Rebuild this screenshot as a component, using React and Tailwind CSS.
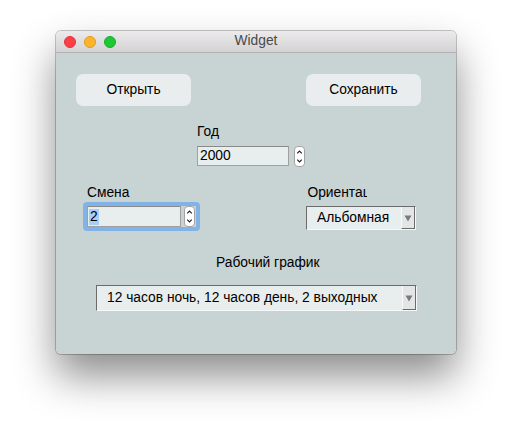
import React from "react";

function Spinner() {
  return (
    <div className="w-[11px] h-[21px] shrink-0">
      <svg width="11" height="21" viewBox="0 0 11 21">
        <rect x="0.5" y="0.5" width="10" height="20" rx="3.5" fill="#ffffff" stroke="#a3a3a3" />
        <path d="M3.2 7.4 L5.5 5 L7.8 7.4" fill="none" stroke="#222" strokeWidth="1.2" />
        <path d="M3.2 13.6 L5.5 16 L7.8 13.6" fill="none" stroke="#222" strokeWidth="1.2" />
      </svg>
    </div>
  );
}

function Combo({ text, width, height }) {
  return (
    <div
      className={`flex border-t border-l border-t-[#6b6b6b] border-l-[#6b6b6b] border-r border-b border-r-[#f7f7f7] border-b-[#f7f7f7] bg-[#e8eded] ${width} ${height}`}
    >
      <div className="flex-1 flex items-center pl-[10px] text-black whitespace-nowrap overflow-hidden">
        {text}
      </div>
      <div className="w-[14px] flex items-center justify-center bg-[#e3e6e6] border-l border-l-[#fafafa] border-r border-b border-r-[#6b6b6b] border-b-[#6b6b6b]">
        <svg width="8" height="8" viewBox="0 0 8 8">
          <path d="M0.5 1.5 L7.5 1.5 L4 7.5 Z" fill="#7a7a7a" />
        </svg>
      </div>
    </div>
  );
}

export default function App() {
  return (
    <div
      className="w-[512px] h-[434px] bg-white pt-[31px] pl-[56px]"
      style={{ fontFamily: '"Liberation Sans", Arial, sans-serif' }}
    >
      <div className="w-[400px] h-[323px] rounded-[5px] overflow-hidden shadow-[0_22px_42px_rgba(0,0,0,0.45),0_0_0_1px_rgba(0,0,0,0.22)] flex flex-col">
        <div className="h-[22px] shrink-0 bg-gradient-to-b from-[#ecebec] to-[#d4d2d4] border-b border-b-[#b3b1b3] flex items-center relative">
          <div className="flex items-center gap-[8px] pl-[8px]">
            <div className="w-[12px] h-[12px] rounded-full bg-[#fc3e47] border border-[#e2343d]" />
            <div className="w-[12px] h-[12px] rounded-full bg-[#fdb32a] border border-[#e09c1e]" />
            <div className="w-[12px] h-[12px] rounded-full bg-[#1fc734] border border-[#17ad29]" />
          </div>
          <div className="absolute inset-0 flex items-center justify-center text-[13.8px] text-[#4a4a4a]">
            Widget
          </div>
        </div>

        <div className="flex-1 bg-[#c8d3d3] flex flex-col text-[13.8px] text-black leading-[16px]">
          <div className="flex mt-[21px] pl-[20px]">
            <div className="w-[115px] h-[32px] rounded-[7px] bg-[#e9eded] flex items-center justify-center">
              Открыть
            </div>
            <div className="ml-[115px] w-[115px] h-[32px] rounded-[7px] bg-[#e9eded] flex items-center justify-center">
              Сохранить
            </div>
          </div>

          <div className="mt-[18px] pl-[141px] flex flex-col">
            <div className="h-[16px]">Год</div>
            <div className="mt-[6px] flex items-start">
              <div className="w-[92px] h-[20px] bg-[#e8eded] border border-[#a0a0a0] border-t-[#8a8a8a] flex items-center pl-[2px]">
                2000
              </div>
              <div className="ml-[5px]">
                <Spinner />
              </div>
            </div>
          </div>

          <div className="mt-[18px] flex">
            <div className="ml-[31px] h-[16px]">Смена</div>
            <div className="ml-[178px] h-[16px] w-[60px] overflow-hidden whitespace-nowrap">Ориентация</div>
          </div>

          <div className="flex items-start">
            <div className="ml-[27px] mt-[1px] w-[117px] h-[29px] rounded-[4px] border-[4px] border-[#82b3e6] flex items-stretch">
              <div className="w-[94px] h-[21px] bg-[#e8eded] border border-[#a0a0a0] border-t-[#8a8a8a] flex items-center pl-[1px]">
                <span className="bg-[#a8cdf6] px-[1px]">2</span>
              </div>
              <div className="ml-[3px]">
                <Spinner />
              </div>
            </div>
            <div className="ml-[106px] mt-[5px]">
              <Combo text="Альбомная" width="w-[110px]" height="h-[24px]" />
            </div>
          </div>

          <div className="mt-[24px] pl-[160px] h-[16px]">Рабочий график</div>

          <div className="mt-[14px] pl-[40px]">
            <Combo text="12 часов ночь, 12 часов день, 2 выходных" width="w-[321px]" height="h-[26px]" />
          </div>
        </div>
      </div>
    </div>
  );
}
